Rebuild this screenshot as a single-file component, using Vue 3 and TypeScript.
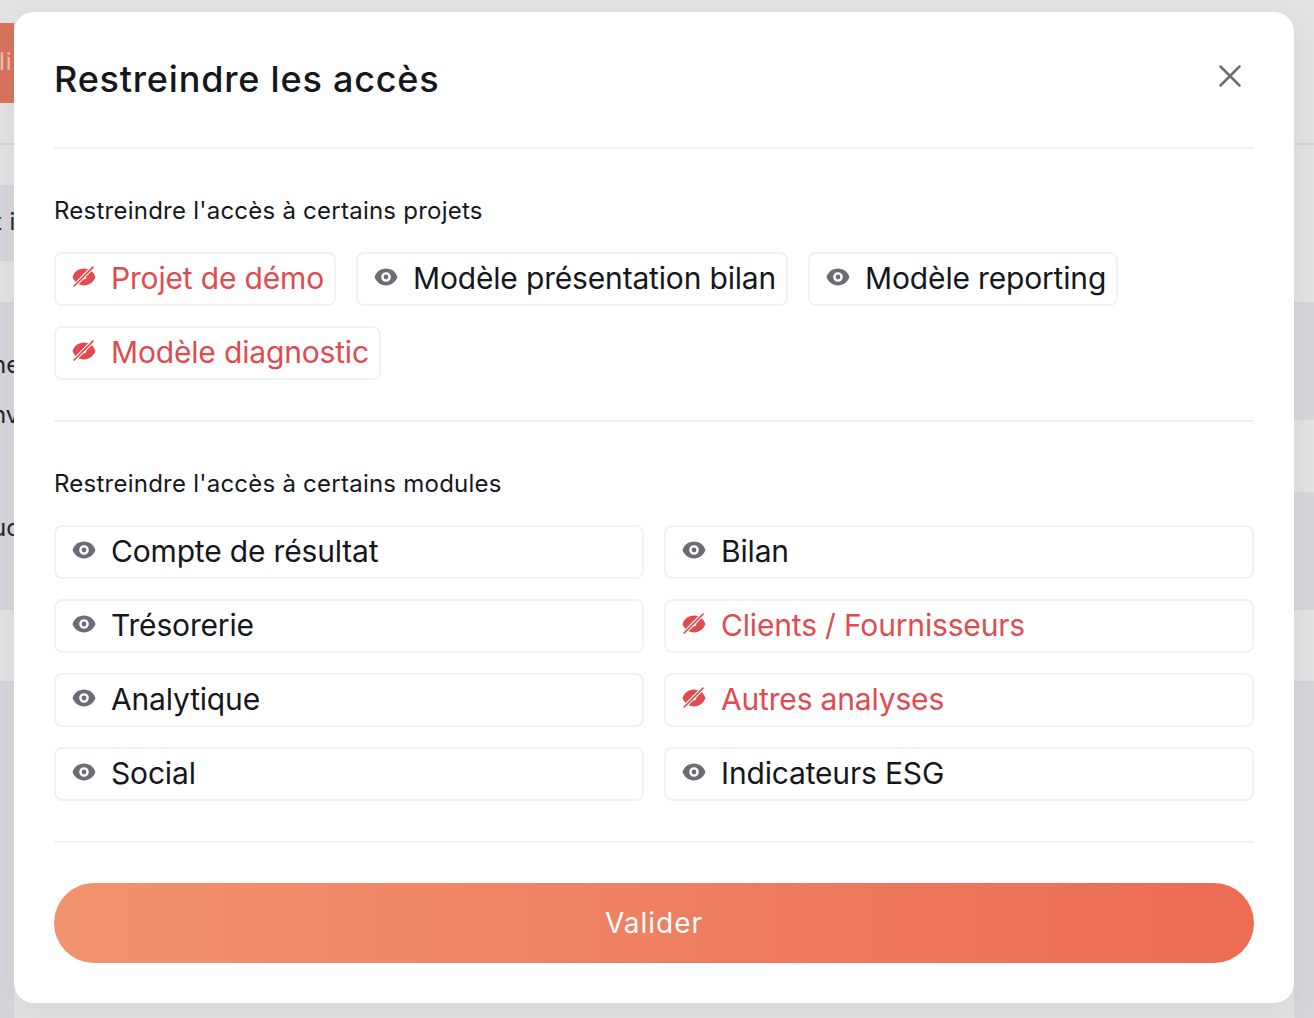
<script setup lang="ts">
type Item = { label: string; hidden: boolean }

const projects: Item[] = [
  { label: 'Projet de démo', hidden: true },
  { label: 'Modèle présentation bilan', hidden: false },
  { label: 'Modèle reporting', hidden: false },
  { label: 'Modèle diagnostic', hidden: true },
]

const modules: Item[] = [
  { label: 'Compte de résultat', hidden: false },
  { label: 'Bilan', hidden: false },
  { label: 'Trésorerie', hidden: false },
  { label: 'Clients / Fournisseurs', hidden: true },
  { label: 'Analytique', hidden: false },
  { label: 'Autres analyses', hidden: true },
  { label: 'Social', hidden: false },
  { label: 'Indicateurs ESG', hidden: false },
]

const EYE_PUPIL = 'M10 12a2 2 0 100-4 2 2 0 000 4z'
const EYE =
  'M.458 10C1.732 5.943 5.522 3 10 3s8.268 2.943 9.542 7c-1.274 4.057-5.064 7-9.542 7S1.732 14.057.458 10zM14 10a4 4 0 11-8 0 4 4 0 018 0z'
const EYE_SOLID =
  'M.458 10C1.732 5.943 5.522 3 10 3s8.268 2.943 9.542 7c-1.274 4.057-5.064 7-9.542 7S1.732 14.057.458 10zM12 10a2 2 0 11-4 0 2 2 0 014 0z'
const SLASH = 'M17.500 1.800 1.800 17.500'
</script>

<template>
  <div class="page">
    <div class="backdrop">
      <div class="col col-left">
        <div class="cell top"><span class="bg-btn">lis</span></div>
        <div class="cell ruled h-42"></div>
        <div class="cell dark h-76"><span class="frag frag-ti">t i</span></div>
        <div class="cell h-41"></div>
        <div class="cell ruled dark h-306">
          <span class="frag l1">ne</span>
          <span class="frag l2">nv</span>
          <span class="frag l3">uc</span>
        </div>
        <div class="cell ruled h-73"></div>
        <div class="cell ruled dark fill"></div>
      </div>
      <div class="col col-right">
        <div class="cell top"></div>
        <div class="cell ruled h-159"></div>
        <div class="cell ruled dark h-118"></div>
        <div class="cell h-72"></div>
        <div class="cell dark h-116"></div>
        <div class="cell ruled h-73"></div>
        <div class="cell ruled dark fill"></div>
      </div>
    </div>

    <section class="modal">
      <header class="head">
        <h1>Restreindre les accès</h1>
        <button class="close" aria-label="Fermer">
          <svg width="24" height="24" viewBox="0 0 24 24" fill="none" stroke="currentColor" stroke-width="2.500" stroke-linecap="round">
            <path d="M2.500 2.500 21.500 21.500M21.500 2.500 2.500 21.500" />
          </svg>
        </button>
      </header>

      <div class="block">
        <h2>Restreindre l'accès à certains projets</h2>
        <div class="chips">
          <div v-for="p in projects" :key="p.label" class="chip" :class="{ off: p.hidden }">
            <svg v-if="p.hidden" class="icon" viewBox="0 0 20 20" fill="currentColor">
              <path :d="EYE_SOLID" fill-rule="evenodd" clip-rule="evenodd" />
              <path :d="SLASH" fill="none" stroke="#fff" stroke-width="3.200" />
              <path :d="SLASH" fill="none" stroke="currentColor" stroke-width="1.400" stroke-linecap="round" />
            </svg>
            <svg v-else class="icon" viewBox="0 0 20 20" fill="currentColor">
              <path :d="EYE_PUPIL" />
              <path :d="EYE" fill-rule="evenodd" clip-rule="evenodd" />
            </svg>
            <span class="label">{{ p.label }}</span>
          </div>
        </div>
      </div>

      <div class="block">
        <h2>Restreindre l'accès à certains modules</h2>
        <div class="grid">
          <div v-for="m in modules" :key="m.label" class="chip" :class="{ off: m.hidden }">
            <svg v-if="m.hidden" class="icon" viewBox="0 0 20 20" fill="currentColor">
              <path :d="EYE_SOLID" fill-rule="evenodd" clip-rule="evenodd" />
              <path :d="SLASH" fill="none" stroke="#fff" stroke-width="3.200" />
              <path :d="SLASH" fill="none" stroke="currentColor" stroke-width="1.400" stroke-linecap="round" />
            </svg>
            <svg v-else class="icon" viewBox="0 0 20 20" fill="currentColor">
              <path :d="EYE_PUPIL" />
              <path :d="EYE" fill-rule="evenodd" clip-rule="evenodd" />
            </svg>
            <span class="label">{{ m.label }}</span>
          </div>
        </div>
      </div>

      <button class="submit">Valider</button>
    </section>
  </div>
</template>

<style>
html, body { margin: 0; background: #e3e3e4; }
</style>

<style scoped>
.page {
  position: relative;
  width: 1314px;
  height: 1018px;
  overflow: hidden;
  background: #e3e3e4;
  font-family: Inter, "Open Sans", sans-serif;
}
.backdrop { display: flex; justify-content: space-between; height: 100%; }
.col { display: flex; flex-direction: column; overflow: hidden; }
.col-left { width: 14px; }
.col-right { width: 20px; }
.cell { position: relative; box-sizing: border-box; flex: none; }
.cell.fill { flex: 1; }
.cell.top { height: 143px; padding-top: 23px; }
.cell.ruled { border-top: 2px solid #d4d4d6; }
.cell.dark { background: #d6d6dc; }
.h-41 { height: 41px; }
.h-42 { height: 42px; }
.h-72 { height: 72px; }
.h-73 { height: 73px; }
.h-76 { height: 76px; }
.h-116 { height: 116px; }
.h-118 { height: 118px; }
.h-159 { height: 159px; }
.h-306 { height: 306px; }
.bg-btn {
  display: block;
  width: 14px;
  height: 80px;
  overflow: hidden;
  background: #d9735c;
  color: #efc1b2;
  font-size: 24px;
  line-height: 78px;
  text-indent: -1px;
  letter-spacing: 1px;
  white-space: nowrap;
}
.frag { position: absolute; font-size: 24px; color: #23232a; white-space: nowrap; line-height: 30px; }
.frag-ti { left: -6px; top: 22px; letter-spacing: 0.4px; }
.l1 { left: -8px; top: 46px; }
.l2 { left: -8px; top: 96px; }
.l3 { left: -8px; top: 209px; }

.modal {
  position: absolute;
  left: 14px;
  top: 12px;
  width: 1280px;
  height: 991px;
  box-sizing: border-box;
  padding: 0 40px 40px;
  background: #fff;
  border-radius: 20px;
  box-shadow: 0 10px 30px rgba(60, 60, 80, 0.08);
  display: flex;
  flex-direction: column;
  color: #16171d;
}
.head {
  height: 137px;
  flex: none;
  box-sizing: border-box;
  border-bottom: 2px solid #f1f1f6;
  display: flex;
  align-items: flex-start;
  justify-content: space-between;
}
h1 {
  margin: 45px 0 0;
  font-size: 36px;
  line-height: 44px;
  font-weight: 500;
  letter-spacing: 0.8px;
}
.close {
  margin: 52px 12px 0 0;
  padding: 0;
  border: 0;
  background: none;
  color: #6b6d76;
  width: 24px;
  height: 24px;
}
.close svg { display: block; }
.block { border-bottom: 2px solid #f1f1f6; padding: 45px 0 40px; }
h2 {
  margin: 0 0 24px;
  font-size: 24px;
  line-height: 34px;
  font-weight: 400;
  letter-spacing: 0.24px;
}
.chips { display: flex; flex-wrap: wrap; gap: 20px; }
.grid { display: grid; grid-template-columns: 1fr 1fr; gap: 20px; }
.chip {
  height: 54px;
  box-sizing: border-box;
  border: 2px solid #f1f1f6;
  border-radius: 8px;
  display: flex;
  align-items: center;
  padding: 0 10px 0 16px;
  font-size: 30px;
  letter-spacing: -0.17px;
  color: #16171d;
  gap: 15px;
  white-space: nowrap;
}
.label { margin-top: -2px; }
.icon { width: 24px; height: 24px; flex: none; color: #6b6d76; margin-top: -4px; }
.chip.off { color: #e14b4f; }
.chip.off .icon { color: #e14b4f; }
.submit {
  margin-top: 40px;
  height: 80px;
  flex: none;
  border: 0;
  border-radius: 40px;
  background: linear-gradient(90deg, #f2936f, #ec6c54);
  color: #fff;
  font: inherit;
  font-size: 28px;
  letter-spacing: 1px;
  padding-bottom: 2px;
}
</style>
